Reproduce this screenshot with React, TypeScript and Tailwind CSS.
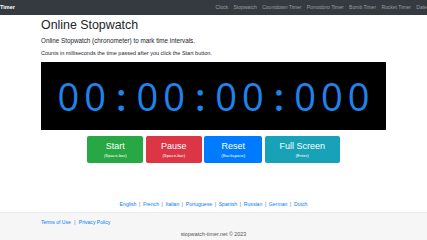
const NAV_LINKS = ["Clock", "Stopwatch", "Countdown Timer", "Pomodoro Timer", "Bomb Timer", "Rocket Timer", "Date Calculator"];
const LANGS = ["English", "French", "Italian", "Portuguese", "Spanish", "Russian", "German", "Dutch"];

const BUTTONS = [
  { label: "Start", hint: "(Space-bar)", cls: "w-[56px] bg-[#28a745]" },
  { label: "Pause", hint: "(Space-bar)", cls: "w-[56px] bg-[#dc3545]" },
  { label: "Reset", hint: "(Backspace)", cls: "w-[58px] bg-[#007bff]" },
  { label: "Full Screen", hint: "(Enter)", cls: "w-[75px] bg-[#17a2b8]" },
];

function Colon() {
  return <span className="mx-[5px] font-semibold">:</span>;
}

export default function App() {
  return (
    <div className="w-[427px] h-[240px] overflow-hidden bg-white flex flex-col text-[#212529] font-['Liberation_Sans',Arial,sans-serif]">
      {/* navbar */}
      <nav className="h-[15px] shrink-0 bg-[#343a40] flex items-center whitespace-nowrap overflow-hidden">
        <span className="text-white font-bold text-[5.5px] shrink-0">Timer</span>
        <div className="flex ml-[198px] shrink-0">
          {NAV_LINKS.map(l => (
            <span key={l} className="px-[2.7px] text-[5px] text-[#9a9da1]">{l}</span>
          ))}
        </div>
      </nav>

      <main className="w-[345px] mx-auto flex flex-col">
        <h1 className="mt-[3px] text-[12.4px] leading-[15px] font-medium">Online Stopwatch</h1>
        <p className="mt-[4px] text-[6.3px] leading-[8px]">Online Stopwatch (chronometer) to mark time intervals.</p>
        <p className="mt-[5px] text-[5.5px] leading-[7px]">Counts in milliseconds the time passed after you click the Start button.</p>

        <div className="mt-[5px] h-[68px] bg-black flex items-center justify-center pl-[5px] text-[38px] leading-none text-[#1f83ec] font-['Open_Sans',sans-serif] tracking-[5px]">
          <span>00</span><Colon /><span>00</span><Colon /><span>00</span><Colon /><span>000</span>
        </div>

        <div className="mt-[6px] flex justify-center gap-[2.5px]">
          {BUTTONS.map(b => (
            <button key={b.label} className={`${b.cls} h-[27px] rounded-[2px] text-white flex flex-col items-center justify-center`}>
              <span className="text-[9px] leading-[10px]">{b.label}</span>
              <span className="text-[4.3px] leading-[5px] mt-[2px]">{b.hint}</span>
            </button>
          ))}
        </div>

        <div className="mt-[38px] flex justify-center text-[5.15px] leading-[7px] text-[#007bff]">
          {LANGS.map((l, i) => (
            <span key={l}>
              {i > 0 && <span className="text-[#6c757d] mx-[2.6px]">|</span>}
              {l}
            </span>
          ))}
        </div>
      </main>

      <footer className="mt-auto h-[28px] bg-[#f6f6f6] border-t border-[#ececec] flex flex-col">
        <div className="w-[345px] mx-auto mt-[6px] text-[5.05px] leading-[7px] text-[#007bff]">
          Terms of Use <span className="text-[#6c757d] mx-[2px]">|</span> Privacy Policy
        </div>
        <div className="mt-[5px] text-center text-[5.4px] leading-[7px] text-[#555]">stopwatch-timer.net © 2023</div>
      </footer>
    </div>
  );
}
